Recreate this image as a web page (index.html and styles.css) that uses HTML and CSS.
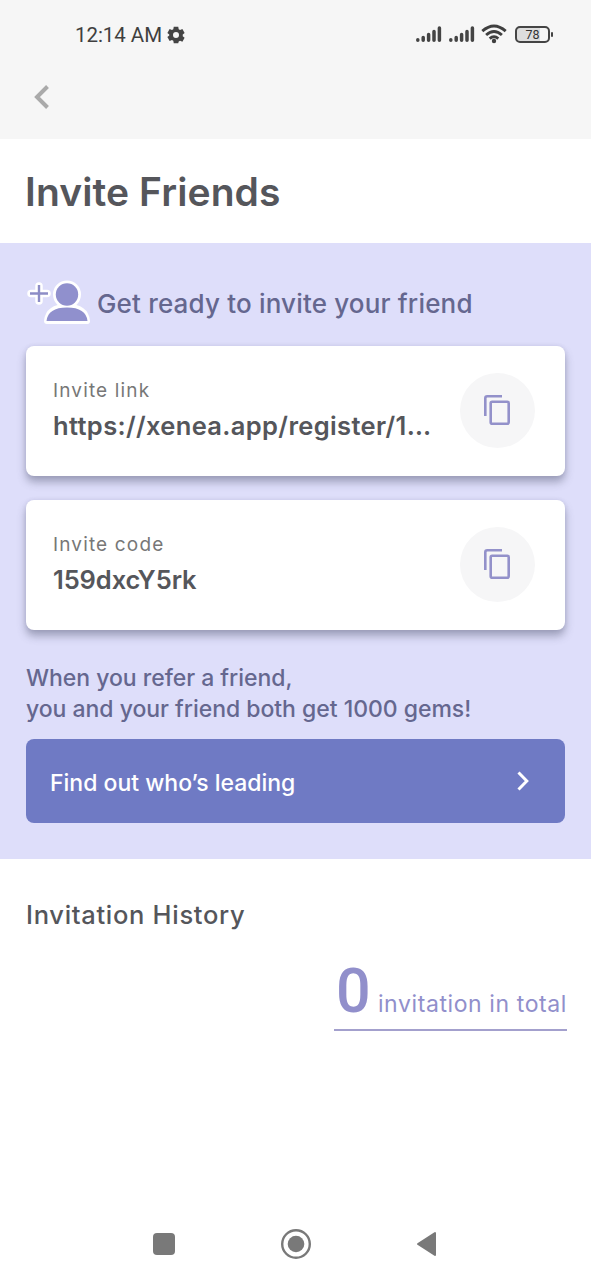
FILE: index.html
```html
<!DOCTYPE html>
<html lang="en">
<head>
<meta charset="utf-8">
<title>Invite Friends</title>
<link rel="stylesheet" href="styles.css">
</head>
<body>
<div class="screen">
  <header class="top">
    <div class="status">
      <div class="clock"><span class="time">12:14 AM</span>
        <svg class="gear" width="18" height="18" viewBox="0 0 24 24"><path fill="#444" fill-rule="evenodd" d="M9 1h6l.6 3.2 1.8 1 3.1-1.1 3 5.200-2.500 2.100v2.200l2.500 2.100-3 5.200-3.100-1.100-1.800 1L15 23H9l-.6-3.200-1.800-1-3.100 1.100-3-5.200L3 12.600v-1.200L.5 9.300l3-5.200 3.100 1.100 1.800-1zM12 8a4 4 0 1 0 0 8 4 4 0 0 0 0-8z"/></svg>
      </div>
      <div class="indicators">
        <svg class="signal" width="28" height="18" viewBox="0 0 28 18"><path class="bars" d="M2.800 14.800v.4M8.200 12.600v2.600M13.600 9.600v5.600M19 6.400v8.800M24.400 3v12.200"/></svg>
        <svg class="signal" width="28" height="18" viewBox="0 0 28 18"><path class="bars" d="M2.800 14.800v.4M8.200 12.600v2.600M13.600 9.600v5.600M19 6.400v8.800M24.400 3v12.200"/></svg>
        <svg class="wifi" width="26" height="20" viewBox="0 0 26 20"><g fill="none" stroke="#3f3f3f" stroke-width="2.900"><path d="M1.300 7.200Q13-3 24.700 7.200"/><path d="M5.100 11Q13 4 20.900 11"/><path d="M8.700 14.600Q13 10.800 17.300 14.600"/></g><circle cx="13" cy="17" r="2.200" fill="#3f3f3f"/></svg>
        <div class="battery"><span class="level">78</span></div>
      </div>
    </div>
    <svg class="back" width="18" height="26" viewBox="0 0 18 26"><path d="M14.500 2.500 4 13l10.500 10.500" fill="none" stroke="#aaa" stroke-width="4"/></svg>
  </header>
  <h1 class="title">Invite Friends</h1>
  <main class="panel">
    <div class="lead">
      <svg class="person" width="66" height="48" viewBox="0 0 66 48">
        <g fill="#fff" stroke="#fff" stroke-width="6" stroke-linejoin="round"><circle cx="41" cy="17.500" r="11"/><path d="M21 44q1.500-14 20-14T61 44z"/></g>
        <path d="M13 9v15M5 16.500h16" stroke="#fff" stroke-width="7.500" stroke-linecap="round"/>
        <g fill="#9090cd"><circle cx="41" cy="17.500" r="11.200"/><path d="M20.500 44q1.500-13.500 20.500-13.500T61.500 44z"/></g>
        <path d="M13 8v17M4 16.500h18" stroke="#8d8dc6" stroke-width="2.400"/>
      </svg>
      <span class="lead-text">Get ready to invite your friend</span>
    </div>
    <section class="card">
      <div class="info"><div class="label label-link">Invite link</div><div class="value value-link">https://xenea.app/register/1…</div></div>
      <div class="copy"><svg width="28" height="32" viewBox="0 0 28 32"><g fill="none" stroke="#9391ca" stroke-width="2.600"><path d="M2.300 22V4.300Q2.300 2.300 4.300 2.300H19"/><rect x="7.700" y="7.700" width="18" height="22" rx="1.500"/></g></svg></div>
    </section>
    <section class="card">
      <div class="info"><div class="label label-code">Invite code</div><div class="value value-code">159dxcY5rk</div></div>
      <div class="copy"><svg width="28" height="32" viewBox="0 0 28 32"><g fill="none" stroke="#9391ca" stroke-width="2.600"><path d="M2.300 22V4.300Q2.300 2.300 4.300 2.300H19"/><rect x="7.700" y="7.700" width="18" height="22" rx="1.500"/></g></svg></div>
    </section>
    <p class="refer"><span class="refer-first">When you refer a friend,</span><br><span class="refer-second">you and your friend both get 1000 gems!</span></p>
    <div class="leading"><span class="leading-text">Find out who’s leading</span>
      <svg width="14" height="22" viewBox="0 0 14 22"><path d="m2.500 2.500 8.300 8.500-8.300 8.500" fill="none" stroke="#fff" stroke-width="3"/></svg>
    </div>
  </main>
  <section class="history">
    <h2 class="history-title">Invitation History</h2>
    <div class="total"><span class="count">0</span><span class="unit">invitation in total</span></div>
  </section>
  <nav class="nav">
    <svg width="22" height="22" viewBox="0 0 22 22"><rect width="22" height="22" rx="4" fill="#797979"/></svg>
    <svg width="30" height="30" viewBox="0 0 30 30"><circle cx="15" cy="15" r="13.800" fill="none" stroke="#797979" stroke-width="2.400"/><circle cx="15" cy="15" r="8.300" fill="#797979"/></svg>
    <svg width="21" height="26" viewBox="0 0 21 26"><path d="M2 13 19 2v22z" fill="#797979" stroke="#797979" stroke-width="2" stroke-linejoin="round"/></svg>
  </nav>
</div>
</body>
</html>
```
FILE: styles.css
```css
* { box-sizing: border-box; }
body { margin: 0; background: #fff; font-family: Inter, "Liberation Sans", sans-serif; font-weight: 500; color: #55565b; }
svg { display: block; flex: none; }
span, .label, .value, h1, h2 { white-space: nowrap; }
.screen { width: 591px; height: 1280px; display: flex; flex-direction: column; overflow: hidden; }
.top { height: 139px; flex: none; background: #f6f6f6; }
.status { height: 68px; padding: 0 38px 0 75px; display: flex; justify-content: space-between; align-items: center; }
.clock { display: flex; align-items: center; gap: 5px; font-family: Roboto, sans-serif; font-size: 20.500px; font-weight: 400; color: #3f3f3f; padding-top: 1px; }
.time { letter-spacing: -.05px; }
.indicators { display: flex; align-items: center; gap: 5px; }
.bars { fill: none; stroke: #444; stroke-width: 3.5; stroke-linecap: round; }
.battery { position: relative; width: 35px; height: 17px; margin: 0 3px 0 3px; border: 2px solid #444; border-radius: 5px; background: linear-gradient(90deg, #ddd 75%, #f6f6f6 75%); text-align: center; }
.battery::after { content: ""; position: absolute; right: -5px; top: 4px; width: 2px; height: 5px; background: #444; border-radius: 1px; }
.level { display: block; font: 400 12.500px/13.500px Roboto, sans-serif; color: #333; }
.back { margin: 16px 0 0 33px; }
.title { height: 104px; flex: none; margin: 0; padding-left: 25px; font-size: 39px; line-height: 105px; font-weight: 600; letter-spacing: .1px; }
.panel { height: 616px; flex: none; background: #dedefa; padding: 34px 26px 0; }
.lead { display: flex; height: 69px; }
.lead-text { margin-left: 5px; font-size: 26px; line-height: 53px; font-weight: 450; letter-spacing: .17px; color: #65678f; }
.card { height: 130px; margin-bottom: 24px; padding: 0 30px 0 27px; display: flex; justify-content: space-between; align-items: center; background: #fff; border-radius: 8px; box-shadow: 0 6px 8px rgba(70,75,100,.42), 0 0 4px rgba(80,80,120,.12); }
.info { padding-bottom: 1px; }
.label { font-size: 19px; line-height: 30px; font-weight: 400; letter-spacing: 1.15px; color: #777; }
.value { font-size: 25.500px; line-height: 40px; font-weight: 600; }
.value-link { letter-spacing: .35px; }
.value-code { letter-spacing: -.1px; }
.copy { width: 75px; height: 75px; margin-bottom: 1px; padding: 0 2px 1px 0; border-radius: 50%; background: #f6f6f7; display: grid; place-items: center; }
.refer { margin: 0; padding-top: 9px; height: 85px; font-size: 23px; line-height: 31px; font-weight: 450; letter-spacing: -.03px; color: #65678f; }
.leading { height: 84px; padding: 0 35px 0 24px; display: flex; align-items: center; justify-content: space-between; border-radius: 8px; background: #6f7ac4; color: #fff; font-size: 23px; }
.leading-text { padding-top: 3px; }
.history { height: 350px; flex: none; padding: 36px 24px 0 26px; display: flex; flex-direction: column; }
.history-title { margin: 0; font-size: 25.500px; line-height: 40px; font-weight: 450; letter-spacing: .7px; }
.total { align-self: flex-end; width: 233px; height: 96px; display: flex; align-items: baseline; justify-content: space-between; border-bottom: 2px solid #a3a0cd; color: #918fcb; padding-left: 2px; }
.count { font-family: Roboto, sans-serif; font-size: 61px; line-height: 112px; font-weight: 500; }
.unit { font-size: 23px; font-weight: 400; letter-spacing: .6px; }
.nav { height: 71px; display: flex; align-items: center; padding: 0 154px 2px 153px; justify-content: space-between; }
```
